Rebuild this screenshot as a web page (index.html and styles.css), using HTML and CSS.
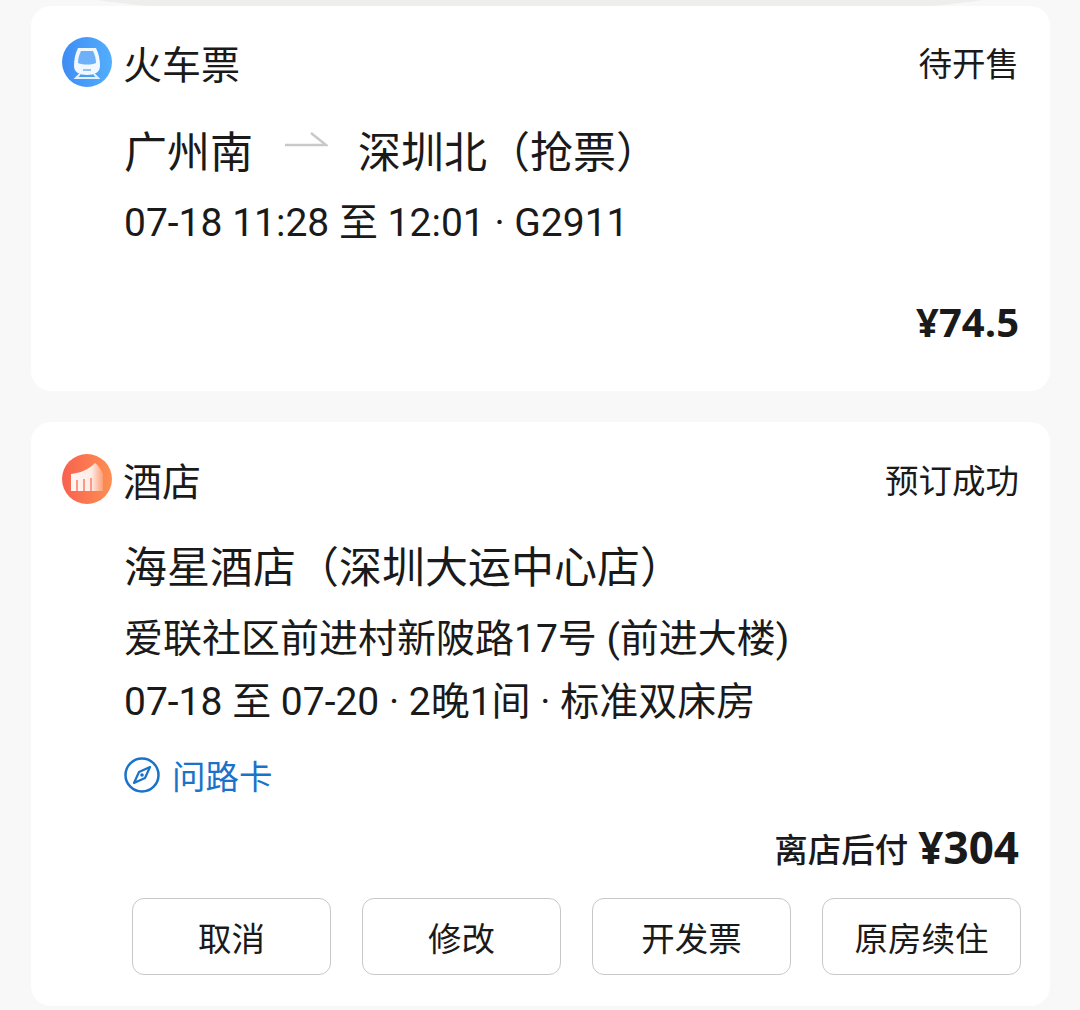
FILE: index.html
```html
<!DOCTYPE html>
<html lang="zh-CN">
<head>
    <meta charset="UTF-8">
    <meta name="viewport" content="width=device-width, initial-scale=1.0">
    <title>行程</title>
    <link rel="stylesheet" href="styles.css">
</head>
<body>
    <div class="top-curve"></div>
    <div class="container">
        <div class="card train-card">
            <div class="card-header">
                <div class="title-group">
                    <svg class="logo" viewBox="0 0 50 50">
                        <defs>
                            <linearGradient id="blue" x1="0" y1="0" x2="1" y2="0">
                                <stop offset="0" stop-color="#3f8cf5"/>
                                <stop offset="1" stop-color="#52aefc"/>
                            </linearGradient>
                        </defs>
                        <circle cx="25" cy="25" r="25" fill="url(#blue)"/>
                        <g class="logo-art">
                            <path d="M16 11h18c3 6 4 12 4 18 0 6-5 9-13 9s-13-3-13-9c0-6 1-12 4-18z" fill="#fff" opacity="0.92"/>
                            <path d="M19 14h12c2 4 3 8 3 12-5 2-13 2-18 0 0-4 1-8 3-12z" fill="#6fb1f8"/>
                            <path d="M21 32h8v2h-8z" fill="#8cc2f9"/>
                            <path d="M18 37l-4 4h22l-4-4" fill="none" stroke="#fff" stroke-width="2" opacity="0.85"/>
                        </g>
                    </svg>
                    <span class="card-title">火车票</span>
                </div>
                <span class="status">待开售</span>
            </div>
            <div class="card-body">
                <div class="route">
                    <span>广州南</span>
                    <svg class="route-arrow" viewBox="0 0 44 16">
                        <path d="M1 14h41L27 2" fill="none" stroke="#c9c9c9" stroke-width="2.500"/>
                    </svg>
                    <span>深圳北<span class="paren">（</span>抢票<span class="paren">）</span></span>
                </div>
                <p class="detail">07-18 11:28 至 12:01 · G2911</p>
            </div>
            <div class="price-row train-price"><span class="price">¥74.5</span></div>
        </div>
        <div class="card hotel-card">
            <div class="card-header">
                <div class="title-group">
                    <svg class="logo" viewBox="0 0 50 50">
                        <defs>
                            <linearGradient id="orange" x1="0" y1="0" x2="1" y2="0">
                                <stop offset="0" stop-color="#f8614f"/>
                                <stop offset="1" stop-color="#fd8f52"/>
                            </linearGradient>
                            <linearGradient id="fade" x1="0" y1="0" x2="1" y2="0">
                                <stop offset="0" stop-color="#fff" stop-opacity="0.95"/>
                                <stop offset="0.65" stop-color="#fff" stop-opacity="0.85"/>
                                <stop offset="1" stop-color="#fff" stop-opacity="0.2"/>
                            </linearGradient>
                        </defs>
                        <circle cx="25" cy="25" r="25" fill="url(#orange)"/>
                        <g class="logo-art">
                            <path d="M9 20c9-1 17-4 24-11 3 2 6 6 8 11v17H9z" fill="url(#fade)"/>
                            <path d="M14 26h2v11h-2zM21 25h2v12h-2zM28 24h2v13h-2z" fill="#fa9a86"/>
                        </g>
                    </svg>
                    <span class="card-title">酒店</span>
                </div>
                <span class="status">预订成功</span>
            </div>
            <div class="card-body">
                <div class="route hotel-name">海星酒店<span class="paren">（</span>深圳大运中心店<span class="paren">）</span></div>
                <p class="detail address">爱联社区前进村新陂路17号 (前进大楼)</p>
                <p class="detail stay">07-18 至 07-20 · 2晚1间 · 标准双床房</p>
                <div class="guide-link">
                    <svg class="compass" viewBox="0 0 36 36">
                        <circle cx="18" cy="18" r="16.500" fill="none" stroke="#1a73c8" stroke-width="2.500"/>
                        <path d="M26 10l-11 5-5 11 11-5z" fill="none" stroke="#1a73c8" stroke-width="2.200" stroke-linejoin="round"/>
                        <circle cx="18" cy="18" r="1.800" fill="#1a73c8"/>
                    </svg>
                    <span>问路卡</span>
                </div>
            </div>
            <div class="price-row hotel-price">
                <span class="price-label">离店后付</span>
                <span class="price big">¥304</span>
            </div>
            <div class="actions">
                <button>取消</button>
                <button>修改</button>
                <button>开发票</button>
                <button>原房续住</button>
            </div>
        </div>
    </div>
</body>
</html>
```

FILE: styles.css
```css
* {
    box-sizing: border-box;
}
body {
    margin: 0;
    width: 1080px;
    height: 1010px;
    overflow: hidden;
    background-color: #f8f8f8;
    color: #1a1a1a;
    font-family: 'Noto Sans CJK SC', 'Noto Sans', sans-serif;
}
.top-curve {
    position: absolute;
    top: -32px;
    left: 80px;
    width: 920px;
    height: 50px;
    border-radius: 50%;
    background: #eeeeec;
}
.container {
    position: relative;
    display: flex;
    flex-direction: column;
    gap: 31px;
    padding: 6px 30px 0 31px;
}
.card {
    background: white;
    border-radius: 20px;
    padding: 0 31px;
}
.train-card {
    height: 385px;
}
.hotel-card {
    height: 584px;
}
.card-header {
    display: flex;
    justify-content: space-between;
    align-items: center;
}
.train-card .card-header {
    padding-top: 31px;
}
.hotel-card .card-header {
    padding-top: 32px;
}
.title-group {
    display: flex;
    align-items: center;
    gap: 11px;
}
.logo {
    width: 50px;
    height: 50px;
}
.logo-art {
    filter: blur(0.5px);
}
.card-title {
    font-size: 39px;
    line-height: 50px;
}
.status {
    font-size: 33.500px;
    line-height: 50px;
}
.card-body {
    padding-left: 62px;
}
.route {
    display: flex;
    align-items: center;
    font-size: 43px;
    line-height: 56px;
    margin-top: 34px;
}
.paren {
    font-family: 'Noto Sans CJK TC', sans-serif;
}
.route-arrow {
    width: 44px;
    height: 16px;
    margin: 0 30px 20px 31px;
}
.hotel-name {
    margin-top: 32px;
}
.detail {
    font-family: 'Roboto', 'Noto Sans CJK SC', sans-serif;
    font-size: 39px;
    line-height: 50px;
    margin: 21px 0 0;
}
.address {
    margin-top: 22px;
}
.stay {
    margin-top: 13px;
}
.guide-link {
    display: flex;
    align-items: center;
    gap: 12px;
    margin-top: 25px;
    color: #1a73c8;
    font-size: 33.500px;
    line-height: 46px;
}
.compass {
    width: 36px;
    height: 36px;
}
.price-row {
    display: flex;
    justify-content: flex-end;
    align-items: center;
    gap: 10px;
}
.train-price {
    margin-top: 49px;
}
.hotel-price {
    margin-top: 24px;
}
.price {
    font-family: 'Open Sans', 'Noto Sans', sans-serif;
    font-weight: 700;
    font-size: 40px;
    line-height: 50px;
}
.price.big {
    font-size: 44px;
}
.price-label {
    font-size: 33.500px;
    font-weight: 500;
}
.actions {
    display: flex;
    justify-content: space-between;
    margin: 26px -2px 0 70px;
}
.actions button {
    width: 199px;
    height: 77px;
    padding: 0;
    background: white;
    border: 1px solid #c8c8c8;
    border-radius: 12px;
    color: #1a1a1a;
    font-family: inherit;
    font-size: 33.500px;
}
```
